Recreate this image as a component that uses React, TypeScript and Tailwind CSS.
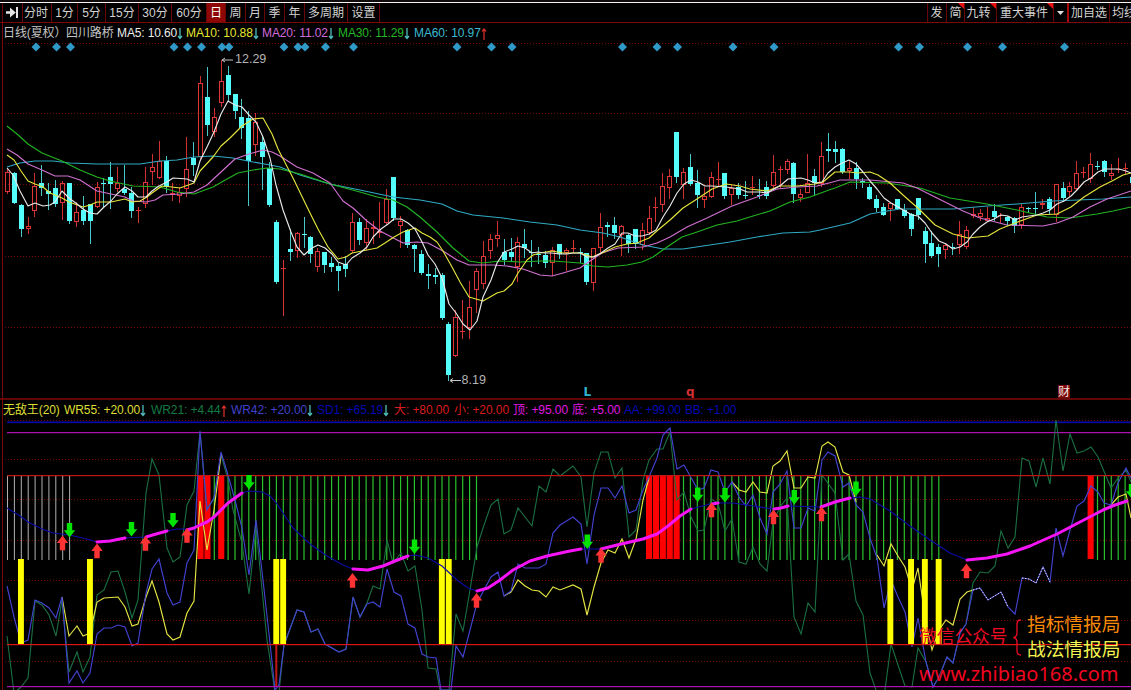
import React from "react";

type Kind = "u" | "d";
type Candle = [Kind, number, number, number, number];

const STEP = 6.9;
const ORIGIN = 7.3;
const xAt = (i: number) => ORIGIN + STEP * i;

/* [direction, high, body top, body bottom, low] */
const CANDLES: Candle[] = [
  ["u", 169, 172, 192, 194], ["d", 172, 173, 203, 203], ["d", 204, 205, 229, 236], ["u", 217, 226, 229, 234],
  ["u", 173, 186, 211, 217], ["d", 165, 183, 188, 195], ["d", 183, 191, 194, 209], ["d", 180, 188, 204, 206],
  ["u", 181, 183, 203, 220], ["d", 183, 183, 221, 223], ["u", 202, 212, 222, 227], ["d", 196, 210, 221, 224],
  ["d", 204, 204, 221, 243], ["u", 182, 187, 207, 208], ["d", 178, 183, 184, 207], ["d", 162, 177, 184, 208],
  ["u", 167, 183, 189, 192], ["d", 165, 189, 193, 194], ["d", 187, 193, 211, 217], ["u", 207, 210, 211, 223],
  ["u", 167, 182, 204, 208], ["u", 154, 167, 172, 185], ["u", 141, 161, 178, 179], ["d", 156, 161, 187, 192],
  ["u", 183, 193, 195, 201], ["u", 187, 192, 196, 203], ["u", 137, 169, 189, 197], ["d", 142, 158, 165, 175],
  ["u", 76, 83, 157, 159], ["d", 67, 97, 125, 135], ["u", 108, 117, 132, 137], ["u", 60, 81, 103, 107],
  ["d", 66, 75, 95, 101], ["d", 94, 94, 111, 118], ["d", 99, 117, 128, 138], ["d", 111, 118, 161, 205],
  ["u", 113, 122, 145, 156], ["d", 135, 142, 157, 189], ["d", 162, 168, 205, 206], ["d", 220, 222, 282, 283],
  ["u", 260, 268, 269, 316], ["d", 229, 249, 252, 260], ["u", 232, 233, 251, 258], ["d", 217, 234, 235, 247],
  ["d", 236, 237, 254, 262], ["u", 248, 251, 267, 272], ["d", 252, 252, 265, 272], ["d", 257, 263, 267, 271],
  ["d", 263, 266, 271, 290], ["d", 256, 264, 269, 276], ["u", 213, 222, 251, 253], ["d", 218, 222, 240, 244],
  ["u", 219, 228, 243, 250], ["u", 221, 227, 229, 244], ["u", 202, 231, 233, 238], ["u", 189, 199, 223, 225],
  ["d", 177, 177, 218, 220], ["u", 216, 221, 226, 248], ["d", 229, 230, 245, 247], ["d", 244, 245, 249, 271],
  ["d", 250, 254, 273, 274], ["d", 264, 274, 276, 288], ["d", 268, 275, 277, 283], ["d", 273, 275, 318, 319],
  ["d", 322, 324, 375, 380], ["u", 310, 317, 356, 357], ["u", 300, 331, 332, 339], ["u", 281, 307, 328, 339],
  ["u", 268, 271, 290, 313], ["u", 241, 256, 284, 289], ["u", 234, 239, 251, 259], ["u", 221, 235, 239, 247],
  ["d", 239, 252, 260, 264], ["d", 238, 252, 257, 260], ["u", 237, 242, 267, 282], ["d", 229, 244, 248, 257],
  ["d", 240, 252, 253, 266], ["d", 247, 254, 255, 263], ["d", 251, 255, 263, 267], ["u", 247, 250, 263, 276],
  ["d", 244, 244, 254, 258], ["u", 248, 250, 253, 271], ["u", 240, 248, 249, 253], ["d", 248, 252, 253, 262],
  ["d", 253, 253, 282, 284], ["u", 248, 248, 283, 291], ["u", 213, 227, 248, 254], ["d", 222, 225, 227, 236],
  ["d", 217, 225, 233, 238], ["u", 225, 226, 235, 256], ["d", 234, 235, 244, 252], ["d", 229, 229, 244, 248],
  ["u", 223, 230, 245, 250], ["u", 206, 218, 233, 235], ["u", 197, 207, 208, 222], ["u", 173, 186, 205, 212],
  ["u", 169, 176, 188, 199], ["d", 132, 132, 177, 182], ["u", 168, 172, 185, 199], ["d", 154, 167, 184, 185],
  ["d", 170, 183, 195, 207], ["u", 187, 196, 200, 208], ["u", 172, 177, 197, 198], ["u", 162, 179, 180, 186],
  ["d", 173, 173, 196, 198], ["u", 185, 188, 195, 205], ["d", 183, 187, 195, 198], ["d", 181, 195, 196, 198],
  ["u", 176, 187, 188, 195], ["d", 179, 195, 196, 198], ["d", 181, 187, 196, 198], ["u", 155, 172, 186, 188],
  ["u", 166, 169, 170, 188], ["u", 159, 161, 170, 174], ["d", 162, 163, 194, 202], ["u", 189, 194, 198, 202],
  ["u", 154, 183, 193, 193], ["d", 169, 176, 183, 195], ["u", 142, 156, 184, 187], ["d", 133, 149, 151, 161],
  ["d", 141, 149, 152, 162], ["d", 148, 149, 172, 173], ["u", 161, 168, 171, 179], ["d", 162, 168, 179, 188],
  ["d", 178, 181, 183, 187], ["d", 184, 187, 199, 199], ["d", 195, 199, 208, 211], ["d", 203, 207, 215, 215],
  ["u", 202, 203, 209, 221], ["d", 199, 199, 209, 209], ["d", 204, 210, 216, 217], ["d", 213, 214, 229, 235],
  ["d", 198, 198, 215, 219], ["d", 227, 231, 244, 262], ["d", 231, 243, 256, 257], ["d", 244, 247, 254, 266],
  ["u", 243, 245, 250, 259], ["d", 243, 247, 248, 254], ["u", 221, 234, 245, 254], ["u", 226, 230, 247, 249],
  ["u", 207, 214, 216, 218], ["u", 209, 213, 217, 221], ["u", 207, 218, 221, 222], ["d", 204, 211, 217, 220],
  ["u", 213, 215, 216, 223], ["d", 216, 217, 221, 225], ["d", 217, 218, 226, 232], ["u", 204, 207, 225, 229],
  ["d", 207, 208, 209, 212], ["d", 192, 208, 209, 214], ["u", 199, 203, 205, 209], ["d", 197, 199, 209, 213],
  ["u", 184, 184, 215, 222], ["d", 182, 188, 198, 201], ["u", 182, 186, 192, 196], ["u", 161, 173, 189, 190],
  ["u", 167, 172, 173, 178], ["u", 153, 164, 179, 183], ["d", 161, 166, 167, 169], ["d", 160, 161, 172, 176],
  ["u", 164, 173, 176, 180], ["u", 158, 169, 170, 173], ["u", 163, 168, 169, 174], ["d", 173, 177, 183, 183],
];

const MA_LINES = [
  {
    color: "#30aac4",
    points:
      "7,167 20,163 35,161 53,161 70,163 97,164 140,164 160,161 177,160 194,157 213,156 233,158 253,162 270,165 280,167 300,175 330,184 360,190 393,197 420,200 442,204 457,211 473,215 503,218 530,222 557,225 580,230 603,233 620,237 643,245 663,249 683,249 703,246 730,242 757,237 783,233 810,232 820,230 850,223 870,214 887,211 900,209 953,209 987,206 1017,204 1053,201 1103,199 1131,197",
  },
  {
    color: "#22b422",
    points:
      "7,126 17,134 28,144 42,153 62,161 80,170 97,177 110,181 133,186 160,187 177,192 194,194 213,187 227,179 238,173 253,170 267,168 280,169 300,174 330,184 360,192 377,197 393,200 407,207 420,217 437,232 453,248 469,261 482,263 500,261 520,262 540,261 553,261 580,263 593,266 608,267 627,265 642,262 653,257 667,247 682,237 697,232 717,225 737,221 753,216 770,211 790,202 810,197 829,190 835,188 850,182 887,183 920,188 950,198 987,204 1017,210 1047,217 1070,218 1097,214 1113,211 1131,207",
  },
  {
    color: "#d070d0",
    points:
      "7,149 17,155 28,164 42,170 55,176 68,176 80,180 97,191 111,194 125,197 133,201 146,202 155,200 163,195 180,194 194,192 207,185 221,172 235,159 249,154 263,150 272,152 280,156 297,167 313,173 330,183 343,201 353,208 367,221 380,231 403,243 417,242 428,243 443,251 457,260 469,265 493,265 507,266 523,269 540,275 552,276 563,273 580,268 590,261 602,253 618,248 643,247 657,243 670,237 687,227 707,218 732,206 757,197 777,189 797,187 817,186 829,183 840,180 870,180 903,183 917,188 937,198 963,211 980,218 1007,225 1043,226 1057,223 1073,217 1090,207 1107,199 1131,191",
  },
  {
    color: "#e4e43c",
    points:
      "7,155 14,160 21,171 28,181 35,184 43,187 50,193 62,198 69,202 83,207 90,205 97,202 111,202 125,199 132,202 140,201 147,197 152,193 162,186 172,187 180,188 194,183 200,171 213,157 221,146 230,138 242,126 253,119 263,118 272,134 278,149 293,178 310,213 318,229 328,247 338,259 346,257 352,253 377,248 385,243 394,237 403,232 415,228 422,233 430,237 437,242 443,251 452,267 460,282 469,297 483,301 497,293 504,291 512,284 518,273 527,260 533,255 540,253 552,251 563,253 580,253 592,257 602,253 615,247 627,244 637,243 649,238 658,230 670,220 683,208 697,199 712,189 726,184 740,186 750,189 767,191 780,186 797,186 815,184 823,182 829,177 835,172 850,172 857,173 870,172 878,175 890,183 903,195 920,210 935,225 953,234 968,238 988,236 1000,229 1015,223 1037,215 1057,214 1071,207 1084,197 1100,187 1112,181 1123,175 1131,173",
  },
  {
    color: "#e8e8e8",
    points:
      "7,168 13,175 20,191 28,206 35,203 43,206 50,205 55,202 62,191 69,198 77,204 83,209 90,213 97,214 104,207 111,201 117,194 125,187 132,191 138,197 146,197 152,191 159,186 167,182 173,178 187,179 194,182 200,161 207,147 214,132 221,114 228,101 235,105 242,107 249,115 256,122 263,137 270,158 276,185 283,210 291,232 297,247 304,255 312,248 318,245 325,248 332,254 338,262 346,265 352,258 360,253 367,247 373,237 381,229 388,224 394,219 401,219 408,223 415,229 422,242 428,255 435,264 442,278 449,304 456,313 463,324 470,330 477,321 483,297 491,280 497,263 504,252 512,249 518,246 525,248 532,253 538,252 545,253 552,253 559,254 567,254 573,253 580,253 587,257 594,257 601,253 608,248 615,244 622,233 628,233 635,236 642,236 649,234 656,230 663,217 670,206 677,193 684,184 691,180 698,182 705,186 712,186 726,187 733,188 740,189 747,192 760,192 767,193 774,189 781,185 788,179 801,178 808,180 815,183 822,182 828,173 835,167 842,163 849,160 856,164 863,172 870,181 877,189 884,198 891,203 898,207 905,211 912,215 918,216 925,223 932,233 939,241 946,244 953,249 960,247 967,242 973,234 980,227 987,222 994,219 1001,215 1008,216 1015,220 1022,217 1029,216 1037,215 1043,213 1050,210 1057,204 1064,201 1071,196 1077,190 1084,182 1091,178 1098,172 1105,169 1119,169 1126,171 1131,173",
  },
];

const DIAMONDS = [
  36, 56.5, 70.5, 174, 187.5, 201.5, 222, 229, 284, 298, 305, 325.5, 353.5, 457, 491.5, 512, 622.5, 657, 677.5, 733,
  774, 898.5, 919.5, 967.5, 1002.5, 1064.5,
];

const WR21 =
  "7,636 14,693 21,687 28,678 35,601 42,605 49,615 56,636 62,600 69,672 77,652 83,672 90,657 97,595 104,590 111,572 118,571 125,592 132,618 138,600 146,493 152,459 159,475 167,548 173,562 180,557 187,505 194,491 200,432 207,509 214,498 221,455 228,479 233,510 242,543 249,594 256,528 267,640 275,692 279,692 284,645 297,610 304,612 311,632 318,629 325,644 339,652 346,649 353,597 360,617 367,603 373,586 380,589 387,540 393,563 401,553 408,571 415,566 422,610 428,668 436,669 440,690 449,690 456,614 463,631 470,590 477,547 483,528 491,505 498,499 504,534 511,530 518,508 532,526 539,486 546,492 553,469 560,476 573,466 581,477 587,527 594,473 601,452 608,452 615,478 622,468 629,537 636,530 643,480 649,460 657,449 663,449 670,432 677,500 684,492 691,517 698,531 704,530 711,499 718,503 725,531 732,519 739,562 746,564 753,547 760,564 767,571 773,522 780,507 787,498 794,617 801,634 808,603 815,612 822,475 835,493 843,560 849,554 856,601 863,615 870,673 877,693 885,690 891,644 905,686 912,687 918,648 926,662 933,687 939,677 947,657 953,663 960,633 966,624 973,583 980,572 988,573 995,566 1001,531 1008,548 1015,537 1022,458 1029,461 1036,487 1043,458 1050,484 1056,420 1063,471 1070,434 1077,453 1084,451 1091,447 1098,457 1111,488 1118,478 1126,470 1131,482";

const WR42 =
  "7,586 14,617 21,643 28,640 35,600 42,603 49,608 56,618 62,597 69,683 77,671 83,683 90,673 97,634 104,628 111,628 118,625 125,627 132,646 138,643 146,593 152,569 159,559 167,593 173,605 180,602 187,563 194,550 200,431 207,510 214,498 221,452 228,475 235,500 242,528 249,575 256,520 263,580 270,643 275,690 279,685 284,645 297,610 304,612 311,632 318,629 325,644 339,652 346,649 353,597 360,617 367,604 373,602 380,607 387,569 394,592 401,596 408,624 415,628 422,654 428,657 436,658 441,690 451,690 456,646 463,657 477,603 491,577 498,572 504,596 511,591 518,564 525,568 539,568 546,564 553,533 560,525 573,517 581,524 587,564 594,515 601,488 608,488 615,498 622,486 629,513 636,510 643,490 649,477 657,458 663,435 670,428 677,469 684,465 698,490 704,488 711,470 718,472 725,492 732,482 739,497 746,506 753,495 760,518 767,534 773,492 780,484 787,471 794,528 801,528 808,508 815,511 822,460 828,452 835,456 843,487 849,483 856,505 863,512 870,538 877,558 884,608 891,580 898,597 905,612 912,647 918,618 926,662 933,687 939,677 947,657 953,663 960,633 966,624 973,590 980,588 988,600 1001,592 1008,607 1015,614 1022,578 1029,579 1036,583 1043,567 1050,582 1056,528 1063,556 1070,530 1077,506 1084,501 1091,486 1098,492 1104,503 1111,505 1118,483 1126,468 1131,478";

const WR55 = [
  "62,597 69,636 77,626 83,636 90,633 97,602 104,598 118,597 125,607 132,626 138,624 146,597 152,581 159,602 167,634 173,640 180,637 187,613 194,601 200,501 207,550 214,510 221,455",
  "504,596 511,592 518,580 525,586 532,590 539,591 546,597 553,587 560,590 573,585 581,589 587,615 594,587 601,563 608,550 615,553 622,539 629,558 636,539 643,500 649,478",
  "732,482 739,490 746,492 753,482 760,492 767,493 773,466 780,461 787,451 794,488 801,488 808,477 815,478 822,446 828,442 835,447 843,472 849,475 856,502",
  "877,555 884,566 891,544 898,556 905,567 912,590 918,568 926,623 932,650 939,630 946,620 953,625 960,599 967,592 973,590",
  "1111,505 1118,497 1126,494 1131,518",
];

const OVERLAP = ["973,590 980,588 988,600 1001,592 1008,607", "1022,578 1029,579 1036,583 1043,567 1050,582"];

const SD1 =
  "7,508 20,516 28,522 42,529 53,533 69,535 83,538 97,542 110,541 125,538 146,537 167,531 177,529 187,529 194,528 200,525 207,522 214,517 228,503 242,493 249,491 262,492 270,496 277,504 293,528 310,544 327,556 343,565 353,569 368,570 383,566 395,561 408,556 415,555 428,558 442,566 457,580 468,588 477,591 488,588 500,580 513,570 530,561 547,556 570,551 581,549 601,549 617,545 643,539 657,534 668,526 680,516 691,509 710,504 718,503 733,503 753,506 773,509 788,506 821,507 850,498 860,497 870,499 890,511 910,526 930,540 950,553 967,560 987,558 1007,554 1030,546 1057,534 1080,522 1103,510 1127,501";

const TREND_UP = [
  "97,542 110,541 125,538",
  "146,537 156,534 167,531",
  "187,530 194,528 200,525 207,522 214,517 228,503 242,493",
  "353,569 368,570 383,566 395,561 408,556",
  "477,591 488,588 500,580 513,570 530,561 547,556 570,551 581,549",
  "601,549 617,545 643,539 657,534 668,526 680,516 691,509",
  "712,504 718,503",
  "774,509 781,508 788,506",
  "821,507 835,502 850,498",
  "967,560 987,558 1007,554 1030,546 1057,534 1080,522 1103,510 1115,505 1127,501",
];

const UP_ARROWS: [number, number][] = [
  [62.5, 535.5], [97, 543.5], [145.5, 536], [187, 528], [352.5, 573], [476.5, 593], [601, 548], [711.5, 502.5],
  [773.5, 509.5], [821.5, 506.5], [966.5, 563.5],
];
const DOWN_ARROWS: [number, number][] = [
  [69.5, 523], [131.5, 522], [173, 513], [249, 475], [414.5, 539.5], [587.3, 534.5], [697.7, 487.5], [725, 488],
  [794.3, 490], [856, 481.5], [1131.5, 484],
];

const range = (from: number, to: number) => Array.from({ length: to - from + 1 }, (_, k) => from + k);
const WHITE_BARS = range(0, 9);
const GREEN_BARS = [30, ...range(32, 68), ...range(98, 135), ...range(158, 163)];
const RED_BARS = [28, 29, 31, 93, 94, 95, 96, 97, 157];
const YELLOW_BARS = [2, 12, 39, 40, 63, 64, 128, 131, 133, 135];

function GridRow({ y }: { y: number }) {
  return <path d={`M5 ${y}.5H1131`} stroke="#740808" strokeDasharray="1 2" shapeRendering="crispEdges" />;
}

function CandleMark({ i, c }: { i: number; c: Candle }) {
  const [kind, high, top, bottom, low] = c;
  const x = Math.round(xAt(i) - 0.5);
  if (kind === "d") {
    return (
      <g fill="#54fcfc" shapeRendering="crispEdges">
        <rect x={x} y={high} width={1} height={low - high + 1} fill="#48c8c8" />
        <rect x={x - 2} y={top} width={5} height={Math.max(1, bottom - top)} />
      </g>
    );
  }
  if (bottom - top < 2) {
    return (
      <g fill="#d83434" shapeRendering="crispEdges">
        <rect x={x} y={high} width={1} height={low - high} />
        <rect x={x - 2} y={top} width={5} height={1} />
      </g>
    );
  }
  return (
    <g shapeRendering="crispEdges">
      <rect x={x} y={high} width={1} height={top - high} fill="#cc3030" />
      <rect x={x} y={bottom} width={1} height={Math.max(0, low - bottom)} fill="#cc3030" />
      <rect x={x - 1.5} y={top + 0.5} width={4} height={bottom - top - 1} fill="none" stroke="#dc3636" />
    </g>
  );
}

function Trend({ up }: { up?: boolean }) {
  return (
    <svg width="6" height="12" viewBox="0 0 6 12" className="mt-[2px] shrink-0" fill="none">
      {up ? (
        <path d="M3 12V1M1 3.5L3 1L5 3.5" stroke="#e83030" strokeWidth="1.2" />
      ) : (
        <path d="M3 0V10M1 8L3 10.5L5 8" stroke="#50bcbc" strokeWidth="1.3" />
      )}
    </svg>
  );
}

function Readout({ text, className, dir }: { text: string; className: string; dir?: "up" | "down" }) {
  return (
    <span className={`flex shrink-0 items-center ${className}`}>
      <span>{text}</span>
      {dir && <Trend up={dir === "up"} />}
    </span>
  );
}

const cell = "flex h-full shrink-0 items-center justify-center border-r border-[#6a0606]";

function Toolbar() {
  return (
    <div className="flex h-[23px] shrink-0 flex-col">
      <div className="h-[2px] shrink-0 bg-[#100c0c]" />
      <div className="h-px shrink-0 bg-[#f4f4f4]" />
      <nav className="flex h-[20px] items-stretch border-b border-[#7c0808] pl-[2px] text-[12px] leading-none text-[#d2d2d2]">
        <div className={`${cell} w-[21px] border-l`}>
          <svg width="13" height="11" viewBox="0 0 13 11" fill="#e4e4e4">
            <path d="M0 4.3H4V0.5L9.8 5.5L4 10.5V6.7H0Z" />
            <rect x="10" y="0" width="2" height="11" />
          </svg>
        </div>
        <div className={`${cell} w-[29px] pr-[2px]`}>分时</div>
        <div className={`${cell} w-[26px]`}>1分</div>
        <div className={`${cell} w-[28px]`}>5分</div>
        <div className={`${cell} w-[33px]`}>15分</div>
        <div className={`${cell} w-[33px]`}>30分</div>
        <div className={`${cell} w-[35px]`}>60分</div>
        <div className={`${cell} w-[19px] bg-[#8e0606] text-white`}>日</div>
        <div className={`${cell} w-[20px]`}>周</div>
        <div className={`${cell} w-[19px]`}>月</div>
        <div className={`${cell} w-[20px]`}>季</div>
        <div className={`${cell} w-[20px]`}>年</div>
        <div className={`${cell} w-[43px]`}>多周期</div>
        <div className={`${cell} w-[32px]`}>设置</div>
        <div className="flex-1" />
        <div className={`${cell} w-[20px] border-l pr-px`}>发</div>
        <div className={`${cell} relative w-[18px]`}>
          简
          <Corner />
        </div>
        <div className={`${cell} relative w-[32px] pr-1`}>
          九转
          <Corner />
        </div>
        <div className={`${cell} relative w-[57px] pr-[2px]`}>
          重大事件
          <Corner />
        </div>
        <div className={`${cell} w-[15px] border-r-2 border-r-[#a80808]`}>
          <svg width="7" height="4" viewBox="0 0 7 4">
            <path d="M0 0H7L3.5 4Z" fill="#dedede" />
          </svg>
        </div>
        <div className={`${cell} w-[41px]`}>加自选</div>
        <div className="flex h-full w-[21px] shrink-0 items-center overflow-hidden pl-[2px] whitespace-nowrap">均线</div>
      </nav>
    </div>
  );
}

function Corner() {
  return (
    <svg className="absolute top-0 right-0" width="6" height="6" viewBox="0 0 6 6">
      <path d="M0 0H6V6Z" fill="#e81010" />
    </svg>
  );
}

function PricePanel() {
  return (
    <section className="flex h-[375px] shrink-0 flex-col">
      <header className="flex h-[18px] shrink-0 items-center pt-px pl-[3px] text-[12px] tracking-[-0.12px] whitespace-nowrap">
        <Readout text="日线(夏权）" className="w-[63px] text-[#c4c4c4]" />
        <Readout text="四川路桥" className="w-[51px] text-[#c4c4c4]" />
        <Readout text="MA5: 10.60" dir="down" className="w-[69px] text-[#ececec]" />
        <Readout text="MA10: 10.88" dir="down" className="w-[76px] text-[#e6e630]" />
        <Readout text="MA20: 11.02" dir="down" className="w-[76px] text-[#d46cdc]" />
        <Readout text="MA30: 11.29" dir="down" className="w-[76px] text-[#26b826]" />
        <Readout text="MA60: 10.97" dir="up" className="w-[76px] text-[#3cbcd0]" />
      </header>
      <svg className="block shrink-0" width="1131" height="357" viewBox="0 41 1131 357" fill="none">
        {[43, 113, 184, 256, 327].map((y) => (
          <GridRow key={y} y={y} />
        ))}
        {DIAMONDS.map((x) => (
          <path key={x} d={`M${x} 42.5l4.5 4.5l-4.5 4.5l-4.5 -4.5z`} fill="#2f9ac8" />
        ))}
        {CANDLES.map((c, i) => (
          <CandleMark key={i} i={i} c={c} />
        ))}
        {MA_LINES.map((l) => (
          <polyline key={l.color} points={l.points} stroke={l.color} strokeWidth="1.15" strokeLinejoin="round" />
        ))}
        <path d="M222 60H233M225 58L222 60L225 62" stroke="#c4c4c4" />
        <text x="235" y="63" fontSize="12.5" fill="#b4b4b4">12.29</text>
        <path d="M450 380.5H461M453 378.5L450 380.5L453 382.5" stroke="#c4c4c4" />
        <text x="461.5" y="384" fontSize="12.5" fill="#b4b4b4">8.19</text>
        <text x="583.5" y="396" fontSize="12" fontWeight="bold" fill="#2fb4cc" fontFamily="DejaVu Sans">L</text>
        <text x="686" y="396" fontSize="12" fontWeight="bold" fill="#d23030" fontFamily="DejaVu Sans">q</text>
        <rect x="1058" y="385" width="12" height="13" fill="#7c0808" />
        <text x="1058" y="395.5" fontSize="12" fill="#f0e4e4">财</text>
      </svg>
    </section>
  );
}

function IndicatorPanel() {
  return (
    <section className="flex min-h-0 flex-1 flex-col border-t-2 border-[#640606]">
      <header className="flex h-[20px] shrink-0 items-center pr-0 pl-[3px] text-[12px] tracking-[-0.08px] whitespace-nowrap">
        <Readout text="无敌王(20)" className="w-[61px] text-[#dede34]" />
        <Readout text="WR55: +20.00" dir="down" className="w-[87px] text-[#dede34]" />
        <Readout text="WR21: +4.44" dir="up" className="w-[80px] text-[#147a44]" />
        <Readout text="WR42: +20.00" dir="down" className="w-[86px] text-[#4040cc]" />
        <Readout text="SD1: +65.19" dir="down" className="w-[77px] text-[#0606b4]" />
        <Readout text="大: +80.00" className="w-[60px] text-[#dc1c1c]" />
        <Readout text="小: +20.00" className="w-[59px] text-[#dc1c1c]" />
        <Readout text="顶: +95.00" className="w-[59px] text-[#e018e0]" />
        <Readout text="底: +5.00" className="w-[52px] text-[#e018e0]" />
        <Readout text="AA: +99.00" className="w-[61px] tracking-[-0.3px] text-[#0606b4]" />
        <Readout text="BB: +1.00" className="w-[60px] tracking-[-0.2px] text-[#0606b4]" />
      </header>
      <svg className="block shrink-0" width="1131" height="270" viewBox="0 420 1131 270" fill="none">
        {[420, 459, 499, 540, 580, 620, 661].map((y) => (
          <GridRow key={y} y={y} />
        ))}
        <rect x="7" y="421.5" width="1124" height="1.6" fill="#0808b0" />
        <rect x="7" y="432" width="1124" height="1.2" fill="#b010b0" />
        {WHITE_BARS.map((i) => (
          <rect key={i} x={xAt(i) - 0.3} y="475" width="1" height="85" fill="#b0b0b0" />
        ))}
        {GREEN_BARS.map((i) => (
          <rect key={i} x={xAt(i) - 0.6} y="475" width="1.2" height="85" fill="#2cc02c" />
        ))}
        {RED_BARS.map((i) => (
          <rect key={i} x={xAt(i) - 3} y="475" width="6.1" height="84" fill="#ff0000" />
        ))}
        <rect x="275.3" y="644" width="2" height="42" fill="#c01818" />
        <polyline points={WR21} stroke="#1a7042" strokeWidth="1.1" />
        {WR55.map((p) => (
          <polyline key={p} points={p} stroke="#e4e444" strokeWidth="1.15" />
        ))}
        <polyline points={WR42} stroke="#4242d0" strokeWidth="1.15" />
        {OVERLAP.map((p) => (
          <polyline key={p} points={p} stroke="#e4e4d8" strokeDasharray="1.5 1.5" />
        ))}
        {YELLOW_BARS.map((i) => (
          <rect key={i} x={xAt(i) - 3.1} y="559" width="5.9" height="85" fill="#ffff00" />
        ))}
        <rect x="7" y="475" width="1124" height="1.2" fill="#c01616" />
        <rect x="7" y="644" width="1124" height="1.2" fill="#dc1616" />
        <rect x="7" y="686" width="1124" height="1.2" fill="#b010b0" />
        <polyline points={SD1} stroke="#0a0aa8" strokeWidth="1.1" />
        {TREND_UP.map((p) => (
          <polyline key={p} points={p} stroke="#f514f5" strokeWidth="3" strokeLinecap="round" strokeLinejoin="round" />
        ))}
        {UP_ARROWS.map(([x, y]) => (
          <path key={x} d={`M${x} ${y}l5.7 7.5h-3v7.2h-5.4v-7.2h-3z`} fill="#ff3333" />
        ))}
        {DOWN_ARROWS.map(([x, y]) => (
          <path key={x} d={`M${x - 2.7} ${y}h5.4v7.2h3l-5.7 7.3l-5.7 -7.3h3z`} fill="#00e400" />
        ))}
      </svg>
    </section>
  );
}

function ContactOverlay() {
  return (
    <div className="absolute right-[9px] bottom-[3px] flex w-[203px] flex-col whitespace-nowrap">
      <div className="flex items-center">
        <span className="w-[94px] text-[17.7px] leading-[20px] text-[#f00a26]">微信公众号</span>
        <svg width="9" height="37" viewBox="0 0 9 37" fill="none" className="shrink-0">
          <path d="M8 1C4.5 1 4 2.5 4 5V14C4 17 3 18 0.5 18.5C3 19 4 20 4 23V32C4 34.5 4.5 36 8 36" stroke="#f00a26" strokeWidth="1.3" />
        </svg>
        <div className="ml-[5px] flex flex-col text-[18.7px] leading-[25px]">
          <span className="text-[#f88a08]">指标情报局</span>
          <span className="text-[#f4f450]">战法情报局</span>
        </div>
      </div>
      <div className="h-[25px] font-['Noto_Sans'] text-[20px] leading-[23px] text-[#f00620]">www.zhibiao168.com</div>
    </div>
  );
}

export default function App() {
  return (
    <main className="relative flex h-[690px] w-[1131px] flex-col overflow-hidden bg-black font-['Liberation_Sans','Noto_Sans_CJK_SC',sans-serif]">
      <Toolbar />
      <div className="relative flex min-h-0 flex-1 flex-col">
        <PricePanel />
        <IndicatorPanel />
        <div className="absolute top-0 left-[2px] h-full w-px bg-[#7a0a0a]" />
      </div>
      <ContactOverlay />
    </main>
  );
}
